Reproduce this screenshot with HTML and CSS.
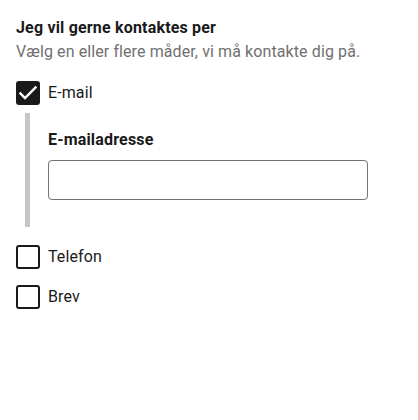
FILE: index.html
```html
<!DOCTYPE html>
<html lang="da">
<head>
<meta charset="utf-8">
<link rel="stylesheet" href="styles.css">
</head>
<body>
<div class="page">
  <div class="title">Jeg vil gerne kontaktes per</div>
  <div class="hint">Vælg en eller flere måder, vi må kontakte dig på.</div>
  <div class="options">
    <div class="option">
      <span class="box checked">
        <svg width="24" height="24" viewBox="0 0 24 24"><path d="M4.5 12.5 L9 17 L19.5 6.5" fill="none" stroke="#fff" stroke-width="2.4" stroke-linecap="square"/></svg>
      </span>
      <span class="label">E-mail</span>
    </div>
    <div class="conditional">
      <div class="field-label">E-mailadresse</div>
      <div class="input"></div>
    </div>
    <div class="option">
      <span class="box"></span>
      <span class="label">Telefon</span>
    </div>
    <div class="option">
      <span class="box"></span>
      <span class="label">Brev</span>
    </div>
  </div>
</div>
</body>
</html>
```

FILE: styles.css
```css
body {
  margin: 0;
  font-family: Roboto, "Noto Sans", sans-serif;
  font-size: 16px;
  color: #1a1a1a;
  background: #fff;
}
.page {
  padding: 16px 16px 16px 16px;
}
.title {
  font-weight: 700;
  line-height: 24px;
  letter-spacing: 0.18px;
}
.hint {
  color: #707070;
  line-height: 24px;
  margin-top: 0;
  letter-spacing: 0.1px;
}
.options {
  margin-top: 17px;
  display: flex;
  flex-direction: column;
}
.option {
  display: flex;
  align-items: center;
  gap: 8px;
  height: 24px;
}
.option + .option {
  margin-top: 16px;
}
.box {
  width: 24px;
  height: 24px;
  box-sizing: border-box;
  border: 2px solid #1a1a1a;
  border-radius: 3px;
  display: block;
}
.box.checked {
  background: #1a1a1a;
  border: none;
}
.box svg {
  display: block;
}
.label {
  line-height: 24px;
  letter-spacing: 0.1px;
}
.conditional {
  margin: 8px 0 18px 9px;
  border-left: 5px solid #c6c6c6;
  padding: 15px 0 27px 18px;
}
.field-label {
  font-weight: 700;
  line-height: 24px;
  letter-spacing: 0.18px;
}
.input {
  margin-top: 8px;
  width: 320px;
  height: 40px;
  box-sizing: border-box;
  border: 1px solid #747474;
  border-radius: 4px;
}
```
